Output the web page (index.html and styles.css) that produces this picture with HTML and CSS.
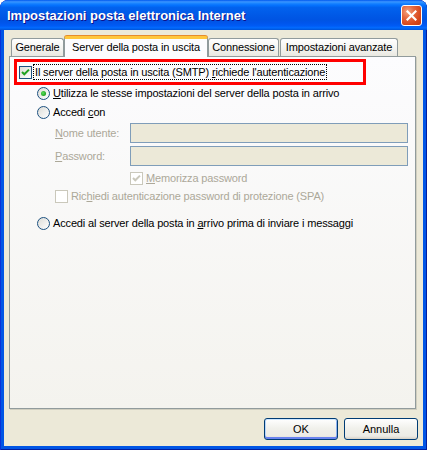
FILE: index.html
```html
<!DOCTYPE html>
<html lang="it">
<head>
    <meta charset="UTF-8">
    <meta name="viewport" content="width=device-width, initial-scale=1.0">
    <title>Impostazioni posta elettronica Internet</title>
    <link rel="stylesheet" href="styles.css">
</head>
<body>

<!-- Dialog window -->
<div class="window">
    <div class="titlebar">
        <span class="title">Impostazioni posta elettronica Internet</span>
        <button class="close" aria-label="Chiudi">
            <svg width="11" height="11" viewBox="0 0 11 11">
                <path d="M1.5 1.5 L9.5 9.5 M9.5 1.5 L1.5 9.5" stroke="#fff" stroke-width="2.2" stroke-linecap="square"/>
            </svg>
        </button>
    </div>

    <div class="client">
        <!-- Tabs -->
        <div class="tabs">
            <div class="tab tab-gen">Generale</div>
            <div class="tab tab-server active">Server della posta in uscita</div>
            <div class="tab tab-conn">Connessione</div>
            <div class="tab tab-adv">Impostazioni avanzate</div>
        </div>

        <!-- Tab page -->
        <div class="panel">
            <div class="highlight">
                <span class="check">
                    <svg width="11" height="11" viewBox="0 0 11 11">
                        <path d="M2 5 L4.3 7.3 L9 2.6" fill="none" stroke="#21A121" stroke-width="2"/>
                    </svg>
                </span>
                <span class="focus">Il server della posta in uscita (SMTP) <u>r</u>ichiede l'autenticazione</span>
            </div>

            <div class="row opt-same">
                <span class="radio on"></span>
                <span class="label"><u>U</u>tilizza le stesse impostazioni del server della posta in arrivo</span>
            </div>

            <div class="row opt-login">
                <span class="radio"></span>
                <span class="label">Accedi <u>c</u>on</span>
            </div>

            <div class="field field-user">
                <span class="field-label disabled"><u>N</u>ome utente:</span>
                <span class="textbox"></span>
            </div>

            <div class="field field-pass">
                <span class="field-label disabled"><u>P</u>assword:</span>
                <span class="textbox"></span>
            </div>

            <div class="row opt-remember">
                <span class="check off">
                    <svg width="11" height="11" viewBox="0 0 11 11">
                        <path d="M2 5 L4.3 7.3 L9 2.6" fill="none" stroke="#CAC8BB" stroke-width="2"/>
                    </svg>
                </span>
                <span class="label disabled"><u>M</u>emorizza password</span>
            </div>

            <div class="row opt-spa">
                <span class="check off"></span>
                <span class="label disabled">Ric<u>h</u>iedi autenticazione password di protezione (SPA)</span>
            </div>

            <div class="row opt-before">
                <span class="radio"></span>
                <span class="label">Accedi al server della posta in <u>a</u>rrivo prima di inviare i messaggi</span>
            </div>
        </div>

        <!-- Dialog buttons -->
        <div class="buttons">
            <button class="btn default">OK</button>
            <button class="btn">Annulla</button>
        </div>
    </div>
</div>

</body>
</html>
```

FILE: styles.css
```css
* {
    box-sizing: border-box;
}

body {
    margin: 0;
    background-color: #ffffff;
    font-family: "Liberation Sans", Arial, sans-serif;
    font-size: 11px;
    letter-spacing: -0.15px;
    color: #000;
}

u {
    text-decoration: underline;
    text-underline-offset: 1px;
}

/* Window frame */
.window {
    width: 427px;
    height: 450px;
    display: flex;
    flex-direction: column;
    background-color: #0055E5;
    border-radius: 8px 8px 0 0;
    overflow: hidden;
    box-shadow: inset 1px 0 #0831D9, inset -1px 0 #001EA0, inset 0 -1px #001EA0;
}

.titlebar {
    height: 30px;
    flex: none;
    display: flex;
    align-items: center;
    justify-content: space-between;
    padding: 0 5px 0 7px;
    background: linear-gradient(to bottom,
        #0058EE 0%, #3A93FF 6%, #288EFF 9%, #127DFF 13%, #036FFC 19%,
        #0262EE 25%, #0057E5 56%, #0054E3 66%, #0055EB 76%, #005BF5 86%,
        #026AFE 92%, #0062EF 96%, #0052D6 100%);
    border-radius: 8px 8px 0 0;
}

.title {
    color: #fff;
    font-weight: bold;
    font-size: 13px;
    letter-spacing: 0;
    text-shadow: 1px 1px #0F1089;
    padding-top: 1px;
}

.close {
    width: 21px;
    height: 21px;
    padding: 0;
    border: 1px solid #fff;
    border-radius: 3px;
    background: radial-gradient(circle at 30% 30%, #F3A583 0%, #E5683F 35%, #D6471C 70%, #C23A12 100%);
    display: flex;
    align-items: center;
    justify-content: center;
    margin-top: 1px;
}

/* Client area */
.client {
    flex: 1;
    margin: 0 4px 4px;
    background-color: #ECE9D8;
    padding: 6px 7px 0 5px;
    display: flex;
    flex-direction: column;
}

/* Tabs */
.tabs {
    display: flex;
    align-items: flex-end;
    height: 21px;
    padding-left: 2px;
    margin-bottom: -1px;
    position: relative;
    z-index: 1;
}

.tab {
    height: 18px;
    margin-bottom: 1px;
    border: 1px solid #919B9C;
    border-bottom: none;
    border-radius: 3px 3px 0 0;
    background: linear-gradient(to bottom, #FFFFFF, #F3F3EF 60%, #E9E8E1);
    text-align: center;
    line-height: 17px;
    white-space: nowrap;
}

.tab.active {
    height: 21px;
    margin-bottom: 0;
    background: #FCFCFE;
    border-top: 3px solid #FFC73C;
    box-shadow: 0 -1px 0 #E68B2C;
    line-height: 16px;
}

.tab-gen { width: 53px; }
.tab-server { width: 144px; }
.tab-conn { width: 71px; }
.tab-adv { width: 118px; margin-left: 1px; }

/* Tab page */
.panel {
    height: 353px;
    flex: none;
    border: 1px solid #919B9C;
    background: linear-gradient(to bottom, #FCFCFE, #F4F3EE);
    box-shadow: 1px 1px 0 #D0CEBF;
    display: flex;
    flex-direction: column;
}

.highlight {
    width: 352px;
    height: 26px;
    margin: 2px 0 0 4px;
    border: 3px solid #FF0000;
    display: flex;
    align-items: center;
    padding-left: 2px;
    gap: 2px;
}

.focus {
    outline: 1px dotted #000;
    outline-offset: 0;
    padding: 1px 1px 0;
    line-height: 13px;
}

.row {
    display: flex;
    align-items: center;
    gap: 3px;
    height: 14px;
}

.opt-same { margin: 1px 0 0 27px; }
.opt-login { margin: 5px 0 0 27px; }
.opt-remember { margin: 5px 0 0 120px; }
.opt-spa { margin: 4px 0 0 45px; }
.opt-before { margin: 13px 0 0 27px; }

.label {
    white-space: nowrap;
}

.disabled {
    color: #ACA899;
}

/* Check boxes and radio buttons */
.check {
    width: 13px;
    height: 13px;
    flex: none;
    border: 1px solid #1C5180;
    background: linear-gradient(135deg, #DCDCD7, #FFFFFF);
    display: flex;
    align-items: center;
    justify-content: center;
}

.check.off {
    border-color: #CAC8BB;
    background: #FFFFFF;
}

.radio {
    width: 13px;
    height: 13px;
    flex: none;
    border: 1px solid #1C5180;
    border-radius: 50%;
    background: linear-gradient(135deg, #DCDCD7, #FFFFFF);
    display: flex;
    align-items: center;
    justify-content: center;
}

.radio.on::after {
    content: "";
    width: 5px;
    height: 5px;
    border-radius: 50%;
    background: radial-gradient(circle at 40% 40%, #5BE05B, #21A121 70%);
}

/* Text fields */
.field {
    display: flex;
    align-items: center;
    height: 20px;
    margin-left: 45px;
}

.field-user { margin-top: 4px; }
.field-pass { margin-top: 3px; }

.field-label {
    width: 75px;
    flex: none;
}

.textbox {
    width: 278px;
    height: 20px;
    border: 1px solid #7F9DB9;
    background-color: #ECE9D8;
}

/* Buttons */
.buttons {
    display: flex;
    justify-content: flex-end;
    gap: 6px;
    margin-top: 9px;
    margin-right: -2px;
}

.btn {
    width: 74px;
    height: 22px;
    padding: 0;
    border: 1px solid #003C74;
    border-radius: 3px;
    background: linear-gradient(to bottom, #FFFFFF, #F0F0EA 50%, #ECEBE6 85%, #D6D0C5);
    font-family: "Liberation Sans", Arial, sans-serif;
    font-size: 11px;
    color: #000;
}

.btn.default {
    box-shadow: inset 0 1px #CEE7FF, inset 0 -2px #6982EE, inset 1px 0 #B8D6FB, inset -1px 0 #8DB2F3;
}
```
